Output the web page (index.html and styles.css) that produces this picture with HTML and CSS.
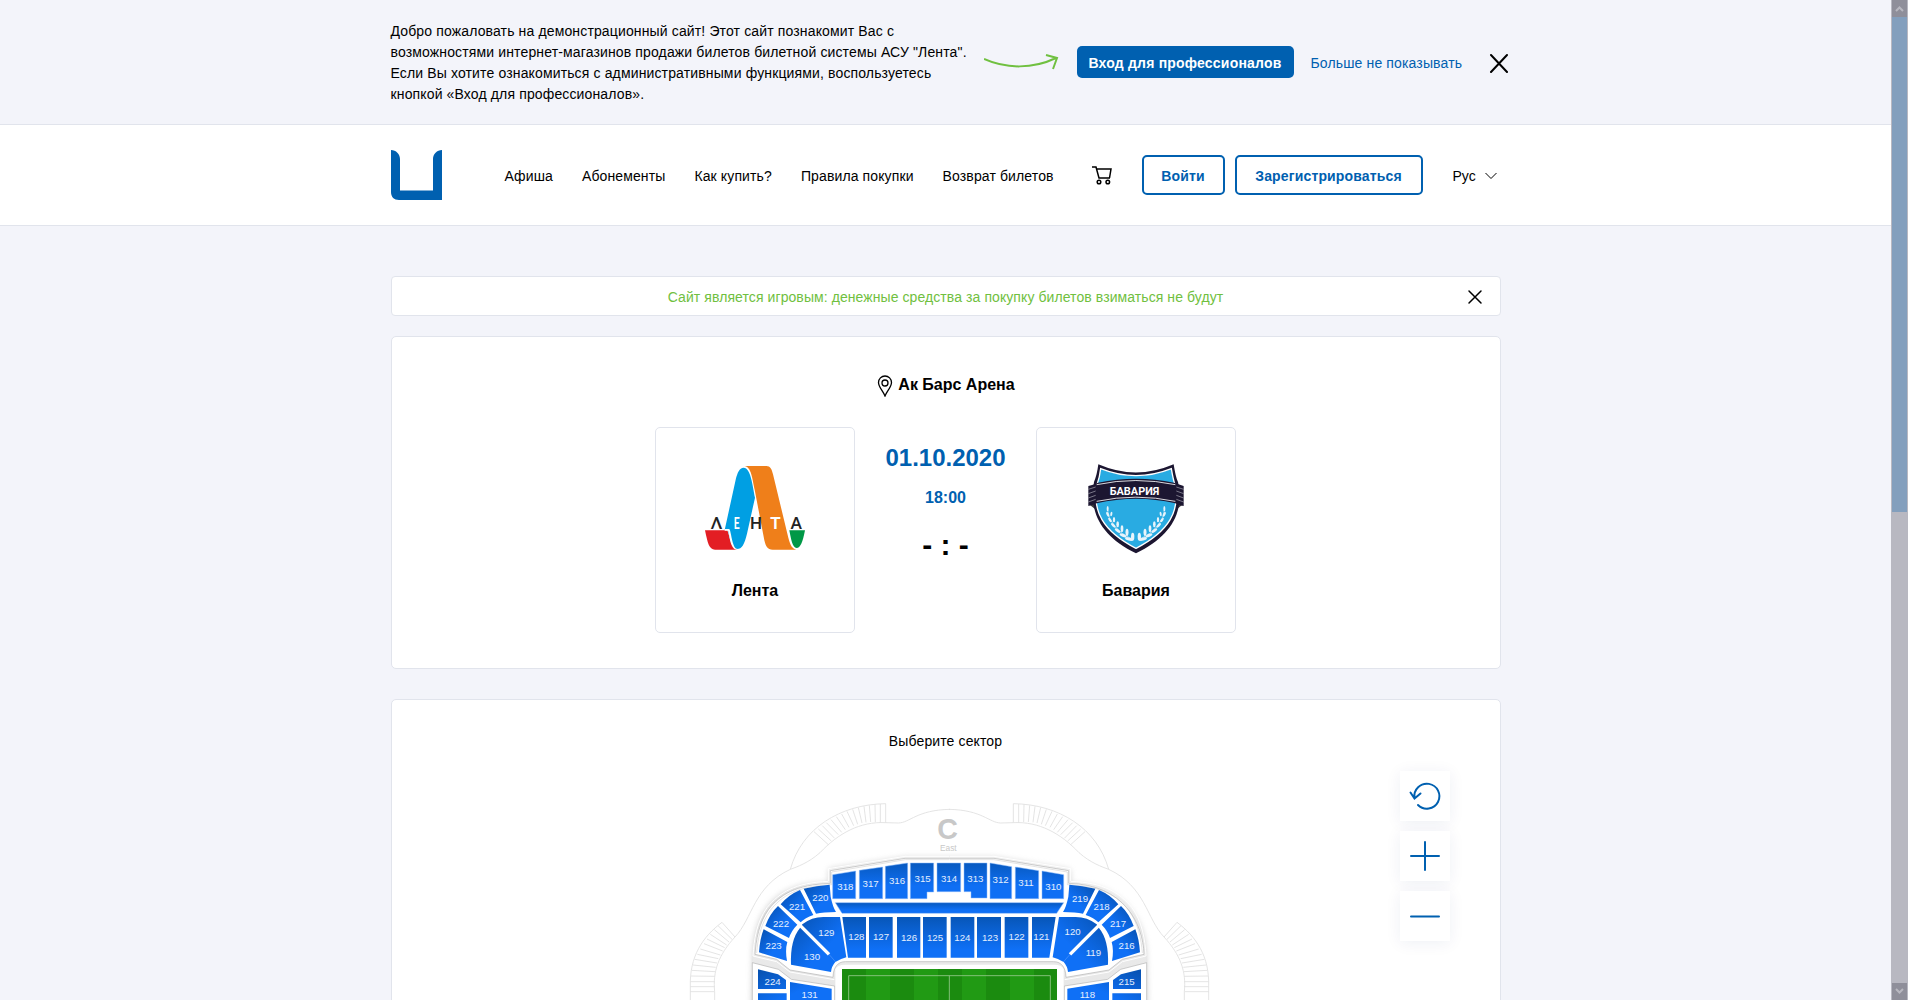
FILE: index.html
```html
<!DOCTYPE html>
<html lang="ru">
<head>
<meta charset="utf-8">
<title>Лента — выбор сектора</title>
<link rel="stylesheet" href="styles.css">
</head>
<body>
<div class="page">
  <section class="welcome">
    <div class="container welcome-row">
      <p class="welcome-text">Добро пожаловать на демонстрационный сайт! Этот сайт познакомит Вас с<br>возможностями интернет-магазинов продажи билетов билетной системы АСУ "Лента".<br>Если Вы хотите ознакомиться с административными функциями, воспользуетесь<br>кнопкой «Вход для профессионалов».</p>
      <svg class="arrow" width="76" height="18" viewBox="0 0 76 18" fill="none" stroke="#70c040" stroke-width="2"><path d="M0 6C22 16 49 16 72 5M62 2l11 3-4 11"/></svg>
      <a class="pro">Вход для профессионалов</a>
      <a class="hide">Больше не показывать</a>
      <svg class="close-big" width="20" height="20" viewBox="0 0 20 20" fill="none" stroke="#000" stroke-width="2" stroke-linecap="round"><path d="M2 2l16 17M18 2L2 19"/></svg>
    </div>
  </section>
  <header class="header">
    <div class="container header-row">
      <svg class="logo" width="51" height="50" viewBox="0 0 51 50" fill="#0060b0"><path d="M0 0c5 0 9 4 9 9v31.500h33V9c0-5 4-9 9-9v50H8c-5 0-8-3-8-8z"/></svg>
      <nav class="nav"><a>Афиша</a><a>Абонементы</a><a>Как купить?</a><a>Правила покупки</a><a>Возврат билетов</a></nav>
      <svg class="cart" width="22" height="20" viewBox="0 0 22 20" fill="none" stroke="#000" stroke-width="1.500"><path d="M0 2h4l3 11h11M5 4h14l-1.500 9"/><circle cx="7" cy="17" r="1.800"/><circle cx="15.800" cy="17" r="1.800"/></svg>
      <a class="btn login">Войти</a>
      <a class="btn register">Зарегистрироваться</a>
      <span class="lang">Рус</span>
      <svg class="chevron" width="12" height="8" viewBox="0 0 12 8" fill="none" stroke="#000"><path d="M.5 1L6 6.500 11.500 1"/></svg>
    </div>
  </header>
  <main class="container main">
    <div class="notice">
      <span>Сайт является игровым: денежные средства за покупку билетов взиматься не будут</span>
      <svg class="close-small" width="16" height="16" viewBox="0 0 16 16" fill="none" stroke="#000" stroke-width="1.500" stroke-linecap="round"><path d="M2 2l12 12M14 2L2 14"/></svg>
    </div>
    <section class="card match">
      <h1 class="arena"><svg width="16" height="22" viewBox="0 0 16 22" fill="none" stroke="#000" stroke-width="1.300"><path d="M8 21C6 16 1.500 12 1.500 7.500a6.500 6.500 0 0 1 13 0C14.500 12 10 16 8 21z"/><circle cx="8" cy="8" r="3"/></svg>Ак Барс Арена</h1>
      <div class="teams">
        <div class="team">
          <svg width="130" height="115" viewBox="0 0 390 345">
            <path fill="#e31e24" d="M45 241h67c8 20 7 40 30 58H75c-18 0-22-20-30-58z"/>
            <path fill="#ef7f1a" d="M163 48h66c12 0 16 9 20 25l46 190c6 24 12 33 24 36h-71c-16 0-20-9-25-28L194 119C187 86 184 50 163 48z"/>
            <path fill="#009fe3" d="M104 240h7c8 0 7 57 30 57 15 0 22-14 30-46l24-108C188 107 182 53 161 53c-13 0-19 17-23 32z"/>
            <path fill="#fff" d="M104 237h13c7 0 8 60 26 60v3c-26 0-24-58-30-58h-9z"/>
            <path fill="#009846" d="M298 241h47c-7 37-14 53-25 53-13 0-17-28-22-53z"/>
            <g font-family="Lato, sans-serif" font-size="53" fill="#222"><text x="63" y="236" textLength="33" lengthAdjust="spacingAndGlyphs" font-weight="bold">Λ</text><text x="131" y="236" textLength="18" lengthAdjust="spacingAndGlyphs" fill="#fff" font-weight="bold">Е</text><text x="180" y="236" textLength="36" lengthAdjust="spacingAndGlyphs" font-weight="bold">Н</text><text x="241" y="236" textLength="31" lengthAdjust="spacingAndGlyphs" fill="#fff" font-weight="bold">Т</text><text x="302" y="236" textLength="33" lengthAdjust="spacingAndGlyphs" font-weight="bold">А</text></g>
          </svg>
          <b>Лента</b>
        </div>
        <div class="when"><div class="date">01.10.2020</div><div class="time">18:00</div><div class="score">- : -</div></div>
        <div class="team">
          <svg width="130" height="115" viewBox="3 -1 390 345">
            <path fill="#3b3b3b" d="M55 160l25 2v18zM341 160l-25 2v18z"/>
            <path fill="#1c1631" d="M85 42q112 49 226 0c4 24 7 40 13 53 20 90-20 162-126 214C92 257 56 185 72 95c6-14 10-30 13-53z"/>
            <path fill="#29abe2" stroke="#fff" stroke-width="4" d="M92 55q106 42 212 0c3 18 6 35 11 48 16 77-16 139-117 191C97 242 66 180 81 103c5-14 9-30 11-48z"/>
            <g fill="#e8f4fb"><g id="wreath"><path d="M112 176q6 57 75 91" fill="none" stroke="#e8f4fb" stroke-width="1.500"/><ellipse cx="113" cy="175" rx="3" ry="8"/><ellipse cx="113" cy="192" rx="3.500" ry="8" transform="rotate(-25 113 192)"/><ellipse cx="124" cy="191" rx="3" ry="7" transform="rotate(10 124 191)"/><ellipse cx="120" cy="209" rx="3.500" ry="8" transform="rotate(-35 120 209)"/><ellipse cx="132" cy="208" rx="3.500" ry="8"/><ellipse cx="130" cy="225" rx="4" ry="9" transform="rotate(-45 130 225)"/><ellipse cx="143" cy="222" rx="4" ry="9"/><ellipse cx="143" cy="241" rx="4" ry="10" transform="rotate(-55 143 241)"/><ellipse cx="156" cy="235" rx="4" ry="10"/><ellipse cx="159" cy="255" rx="4.500" ry="11" transform="rotate(-65 159 255)"/><ellipse cx="171" cy="246" rx="4.500" ry="11"/><ellipse cx="177" cy="266" rx="5" ry="12" transform="rotate(-75 177 266)"/><ellipse cx="188" cy="259" rx="5" ry="12"/></g><use href="#wreath" transform="matrix(-1 0 0 1 396 0)"/></g>
            <path fill="#1c1631" d="M55 107q25-8 29-10 114-24 228 0l29 10v60q-18-3-25-8-118-27-236 0-10 5-25 8z"/>
            <path fill="none" stroke="#fff" stroke-width="2.500" d="M80 103q117-25 236 0M80 153q117-25 236 0"/>
            <path fill="none" stroke="#aaa9b5" stroke-width="2" d="M55 117l22-7M55 130l22-8M55 143l22-8M55 155l22-8M341 117l-22-7M341 130l-22-8M341 143l-22-8M341 155l-22-8"/>
            <text x="119" y="133" textLength="149" lengthAdjust="spacingAndGlyphs" font-family="Roboto, sans-serif" font-weight="bold" font-size="34" fill="#fff">БАВАРИЯ</text>
          </svg>
          <b>Бавария</b>
        </div>
      </div>
    </section>
    <section class="card sectors">
      <p class="choose">Выберите сектор</p>
      <svg class="map" width="531" height="210" viewBox="0 0 1593 630">
        <defs>
          <linearGradient id="top" x2="0" y2="1"><stop stop-color="#0759bf"/><stop offset=".65" stop-color="#0f6ff4"/></linearGradient>
          <linearGradient id="flat" x2="0" y2="1"><stop stop-color="#0756b8"/><stop offset=".8" stop-color="#0f70f6"/></linearGradient>
          <linearGradient id="corner" x2="1" y2="1"><stop stop-color="#0650ae"/><stop offset=".6" stop-color="#0f70f6"/></linearGradient>
          <linearGradient id="bowl" x2="0" y2="1"><stop stop-color="#f1f1f1"/><stop offset="1" stop-color="#e6e6e6"/></linearGradient>
          <filter id="shade" x="-10%" y="-10%" width="120%" height="120%"><feGaussianBlur stdDeviation="9"/></filter>
          <pattern id="grass" x="486" width="144" height="200" patternUnits="userSpaceOnUse"><path fill="#1b8b0f" d="M0 0h72v200H0z"/><path fill="#219a14" d="M72 0h72v200H72z"/></pattern>
          <g id="stairs" fill="none" stroke="#dedede" stroke-width="2.500">
            <path d="M810 58C710 60 690 98 655 99L617 98M617 98V41C480 43 365 115 331 238M617 98C540 94 475 130 420 188 385 219 350 231 331 238 220 290 218 385 165 441M165 441L126 397C68 440 28 500 31 590V630M165 441C115 495 98 545 104 605V630"/>
            <path d="M601 42v56M585 43l1 53M568 46l4 50M552 49l6 48M535 53l11 46M518 58l15 45M501 64l20 43M485 72l22 40M469 80l27 39M453 89l32 38M439 98l36 36M427 107l37 38M415 117l39 36M402 125l43 39M114 407l42 41M103 419l44 37M91 433l49 32M81 447l53 26M72 461l56 22M61 477l60 18M52 493l63 13M44 508l67 11M39 525l68 7M35 541l70 4M33 558l71 1M31 575h73M31 590h73M31 605h72"/>
          </g>
          <path id="outline" d="M808 199H675L445 236v38C345 278 298 308 261 353 230 396 222 448 219 498L290 515 330 546 463 569"/>
          <path id="inner" d="M808 209H676L455 246v38C350 288 305 318 271 361 243 400 233 446 230 489"/>
          <path id="lower" d="M217 640V518L295 538 334 568 464 588V640"/>
          <g id="side">
            <g fill="url(#corner)">
              <path d="M371 296Q410 287 449 284L452 320Q458 350 468 366 430 366 408 371z"/>
              <path d="M302 343Q325 315 360 300L400 375Q375 384 362 397z"/>
              <path d="M256 408Q270 370 294 348L352 404Q334 422 327 444z"/>
              <path d="M251 418L322 456Q315 480 321 513L237 487Q240 445 251 418z"/>
              <path d="M360 414L367 403Q395 381 430 381H480L499 502Q480 507 466 516 454 530 453 546L333 524Q330 450 360 414z"/>
              <path d="M234 538l60 15 24 17v27h-84zM234 610h86v30h-86zM330 576l125 20v44H330z"/>
            </g>
            <path d="M358 404l89 89" stroke="#fff" stroke-width="10"/>
            <path d="M447 493l20 23" stroke="#6aa5fa" stroke-width="1.500"/>
          </g>
        </defs>
        <g><use href="#stairs"/></g><use href="#stairs" transform="matrix(-1 0 0 1 1617 0)"/>
        <g fill="#999" opacity=".5" filter="url(#shade)"><path d="M675 203H942L1170 240v42C1330 280 1400 400 1398 500L1402 680H215L219 500C220 390 270 275 447 280v-42z"/></g>
        <path fill="url(#bowl)" d="M675 201H942L1170 238v38C1335 280 1395 400 1396 497L1400 518V640H217V518L221 497C224 400 285 280 447 276v-38z"/>
        <g fill="#fff" stroke="#b3b3b3" stroke-width="2"><path d="M808 205H675L451 242v38C345 284 300 315 266 358 237 398 228 450 225 493L290 508 330 540 459 562C460 533 472 515 496 515H1121C1145 515 1157 533 1158 562L1287 540 1327 508 1392 493C1389 400 1332 284 1166 280v-38L942 205z"/><use href="#lower"/><use href="#lower" transform="matrix(-1 0 0 1 1617 0)"/></g>
        <g fill="none" stroke="#fff" stroke-width="3"><use href="#outline"/><use href="#outline" transform="matrix(-1 0 0 1 1617 0)"/></g>
        <g fill="none" stroke="#c9c9c9" stroke-width="1.500"><use href="#inner"/><use href="#inner" transform="matrix(-1 0 0 1 1617 0)"/></g>
        <path fill="#fff" d="M466 538Q470 524 496 524H1121Q1148 524 1151 538V640H466z"/>
        <use href="#side"/><use href="#side" transform="matrix(-1 0 0 1 1617 0)"/>
        <g fill="url(#top)" stroke="#8abafc" stroke-width="1.500">
          <path d="M458 254l69-11v83h-69zM538 241l70-10v95h-70zM616 229l67-10v107h-67zM691 219h70v87h-20v20h-50zM771 219h71v86h-71zM852 219h69v105h-48v-19h-21zM930 219l65 11v96h-65zM1006 231l70 11v84h-70zM1086 243l65 11v72h-65z"/>
          <path d="M466 338H1151L1130 370H486z"/>
        </g>
        <g fill="url(#flat)"><path d="M487 381h71v122h-54zM567 381h71v122h-71zM651 381h70v122h-70zM729 381h71v122h-71zM812 381h71v122h-71zM891 381h72v122h-72zM974 381h71v122h-71zM1056 381h71l-19 122h-52z"/></g>
        <path fill="url(#grass)" d="M486 537h645v93H486z"/>
        <path fill="none" stroke="#96ca8d" stroke-width="2.500" d="M506 640V557H1111V640M808 557v83"/>
        <g fill="#e4effe" font-family="Liberation Sans, Arial, sans-serif" font-size="29" text-anchor="middle">
          <text x="496" y="299">318</text><text x="572" y="292">317</text><text x="651" y="282">316</text><text x="728" y="276">315</text><text x="807" y="276">314</text><text x="886" y="276">313</text><text x="962" y="280">312</text><text x="1038" y="288">311</text><text x="1120" y="299">310</text>
          <text x="529" y="450">128</text><text x="603" y="450">127</text><text x="687" y="453">126</text><text x="765" y="453">125</text><text x="847" y="453">124</text><text x="930" y="453">123</text><text x="1010" y="451">122</text><text x="1084" y="451">121</text>
          <text x="421" y="333">220</text><text x="351" y="361">221</text><text x="303" y="412">222</text><text x="281" y="477">223</text><text x="278" y="586">224</text><text x="439" y="438">129</text><text x="396" y="509">130</text><text x="389" y="623">131</text>
          <text x="1200" y="335">219</text><text x="1265" y="361">218</text><text x="1314" y="412">217</text><text x="1340" y="477">216</text><text x="1340" y="586">215</text><text x="1178" y="436">120</text><text x="1240" y="499">119</text><text x="1222" y="623">118</text>
          <text x="1340" y="647">214</text>
        </g>
        <g fill="#c8c8c8" font-family="Liberation Sans, Arial, sans-serif" text-anchor="middle"><text x="803" y="147" font-size="86" font-weight="bold">C</text><text x="805" y="184" font-size="25">East</text></g>
      </svg>
      <div class="controls">
        <button><svg width="50" height="50" viewBox="0 0 50 50"><path d="M14.500 27A12.500 12.500 0 1 1 18 34M10.500 21.500l4 6 6-5"/></svg></button>
        <button><svg width="50" height="50" viewBox="0 0 50 50"><path d="M11 25h28M25 11v28"/></svg></button>
        <button><svg width="50" height="50" viewBox="0 0 50 50"><path d="M11 25.500h28"/></svg></button>
      </div>
    </section>
  </main>
</div>
<aside class="scrollbar">
  <svg class="sb-btn" width="15" height="17" viewBox="0 0 15 17"><path d="M4 11l3.500-3.500L11 11" fill="none" stroke="#b8b8c0" stroke-width="2"/></svg>
  <div class="thumb"></div>
  <svg class="sb-btn" width="15" height="17" viewBox="0 0 15 17"><path d="M4 6l3.500 3.500L11 6" fill="none" stroke="#b8b8c0" stroke-width="2"/></svg>
</aside>
</body>
</html>
```
FILE: styles.css
```css
* { box-sizing: border-box; }
body {
  margin: 0;
  height: 1000px;
  display: flex;
  overflow: hidden;
  background: #f3f4fa;
  color: #000;
  font: 14px/21px "Liberation Sans", Arial, sans-serif;
}
svg { display: block; flex: none; }
.page { width: 1891px; height: 1000px; overflow: hidden; }
.container { width: 1110px; margin: 0 auto; }
.welcome { height: 125px; border-bottom: 1px solid #e1e4ec; }
.welcome-row { display: flex; align-items: center; height: 124px; white-space: nowrap; }
.welcome-text { margin: 0; padding-top: 2px; width: 593px; flex: none; letter-spacing: .14px; }
.arrow { margin: 0 17px 0 0; }
.pro {
  width: 217px;
  height: 32px;
  flex: none;
  margin-right: 17px;
  border-radius: 5px;
  background: #0060b0;
  color: #fff;
  font-weight: bold;
  line-height: 34px;
  letter-spacing: .2px;
  text-align: center;
}
.hide { color: #0060b0; width: 178px; flex: none; padding-top: 2px; letter-spacing: .14px; }
.close-big { margin-top: 2px; }
.header { height: 101px; background: #fff; border-bottom: 1px solid #e1e4ec; }
.header-row { display: flex; align-items: center; height: 100px; white-space: nowrap; }
.nav { display: flex; gap: 29px; width: 587px; margin-left: 63px; flex: none; padding-top: 2px; letter-spacing: .12px; }
.cart { margin-right: 28px; }
.btn {
  height: 40px;
  flex: none;
  border: 2px solid #0060b0;
  border-radius: 5px;
  color: #0060b0;
  font-weight: bold;
  line-height: 38px;
  letter-spacing: .15px;
  text-align: center;
}
.login { width: 83px; margin-right: 10px; }
.register { width: 188px; }
.lang { margin-left: 30px; width: 32px; padding-top: 2px; }
.chevron { margin-top: 1px; }
.main { padding-top: 50px; }
.notice {
  position: relative;
  height: 40px;
  background: #fff;
  border: 1px solid #e1e4ec;
  border-radius: 4px;
  color: #70c040;
  text-align: center;
  line-height: 41px;
  letter-spacing: .08px;
}
.close-small { position: absolute; right: 17px; top: 12px; }
.card { position: relative; background: #fff; border: 1px solid #e1e4ec; border-radius: 5px; }
.match { height: 333px; margin-top: 20px; padding-top: 37px; }
.arena {
  display: flex;
  justify-content: center;
  gap: 5px;
  margin: 0;
  padding-left: 1px;
  height: 53px;
  font-size: 16px;
  line-height: 22px;
}
.arena svg { margin-top: 1px; }
.teams { display: flex; justify-content: center; }
.team {
  display: flex;
  flex-direction: column;
  align-items: center;
  width: 200px;
  height: 206px;
  padding-top: 22px;
  border: 1px solid #e1e4ec;
  border-radius: 5px;
}
.team b { margin-top: 15px; font-size: 16px; }
.when { width: 181px; text-align: center; color: #0060b0; font-weight: bold; }
.date { margin-top: 13px; font-size: 24px; line-height: 36px; }
.time { margin-top: 10px; font-size: 16px; line-height: 24px; }
.score { margin-top: 11px; font-size: 30px; line-height: 48px; color: #000; }
.sectors { height: 600px; margin-top: 30px; padding-top: 31px; }
.choose { margin: 0 0 38px; text-align: center; letter-spacing: .12px; }
.map { margin: 0 auto; }
.controls { position: absolute; top: 71px; right: 50px; display: grid; gap: 10px; }
.controls button {
  width: 50px;
  height: 50px;
  padding: 0;
  border: 0;
  background: #fff;
  box-shadow: 0 2px 15px rgba(20, 40, 110, .07);
}
.controls path { fill: none; stroke: #0060b0; stroke-width: 2; stroke-linecap: round; }
.scrollbar {
  display: flex;
  flex-direction: column;
  width: 17px;
  height: 1000px;
  padding: 0 1px;
  background: #b8b8c1;
}
.sb-btn { background: #8f8f9a; }
.thumb { height: 495px; margin-bottom: auto; background: #839fbd; }
```
